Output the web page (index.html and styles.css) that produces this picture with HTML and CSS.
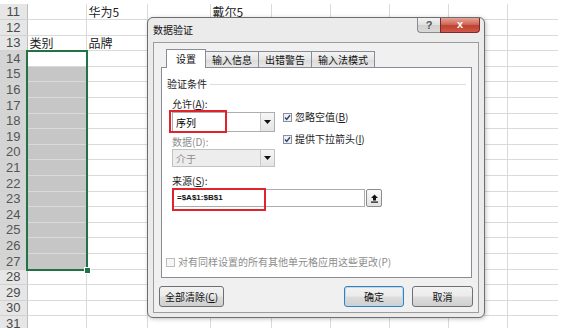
FILE: index.html
```html
<!DOCTYPE html>
<html lang="zh-CN">
<head>
  <meta charset="UTF-8">
  <meta name="viewport" content="width=device-width, initial-scale=1.0">
  <title>数据验证</title>
  <link rel="stylesheet" href="styles.css">
</head>
<body>
  <div class="sheet">
    <table class="grid">
      <colgroup>
        <col class="col-rh"><col class="col-a"><col class="col-b"><col class="col-c"><col class="col-d">
        <col class="col-n"><col class="col-n"><col class="col-n"><col class="col-n"><col class="col-i">
      </colgroup>
      <tr><th>11</th><td></td><td>华为5</td><td></td><td>戴尔5</td><td></td><td></td><td></td><td></td><td></td></tr>
      <tr><th>12</th><td></td><td></td><td></td><td></td><td></td><td></td><td></td><td></td><td></td></tr>
      <tr><th>13</th><td>类别</td><td>品牌</td><td></td><td></td><td></td><td></td><td></td><td></td><td></td></tr>
      <tr><th class="on">14</th><td></td><td></td><td></td><td></td><td></td><td></td><td></td><td></td><td></td></tr>
      <tr><th class="on">15</th><td class="fill"></td><td></td><td></td><td></td><td></td><td></td><td></td><td></td><td></td></tr>
      <tr><th class="on">16</th><td class="fill"></td><td></td><td></td><td></td><td></td><td></td><td></td><td></td><td></td></tr>
      <tr><th class="on">17</th><td class="fill"></td><td></td><td></td><td></td><td></td><td></td><td></td><td></td><td></td></tr>
      <tr><th class="on">18</th><td class="fill"></td><td></td><td></td><td></td><td></td><td></td><td></td><td></td><td></td></tr>
      <tr><th class="on">19</th><td class="fill"></td><td></td><td></td><td></td><td></td><td></td><td></td><td></td><td></td></tr>
      <tr><th class="on">20</th><td class="fill"></td><td></td><td></td><td></td><td></td><td></td><td></td><td></td><td></td></tr>
      <tr><th class="on">21</th><td class="fill"></td><td></td><td></td><td></td><td></td><td></td><td></td><td></td><td></td></tr>
      <tr><th class="on">22</th><td class="fill"></td><td></td><td></td><td></td><td></td><td></td><td></td><td></td><td></td></tr>
      <tr><th class="on">23</th><td class="fill"></td><td></td><td></td><td></td><td></td><td></td><td></td><td></td><td></td></tr>
      <tr><th class="on">24</th><td class="fill"></td><td></td><td></td><td></td><td></td><td></td><td></td><td></td><td></td></tr>
      <tr><th class="on">25</th><td class="fill"></td><td></td><td></td><td></td><td></td><td></td><td></td><td></td><td></td></tr>
      <tr><th class="on">26</th><td class="fill"></td><td></td><td></td><td></td><td></td><td></td><td></td><td></td><td></td></tr>
      <tr><th class="on">27</th><td class="fill"></td><td></td><td></td><td></td><td></td><td></td><td></td><td></td><td></td></tr>
      <tr><th>28</th><td></td><td></td><td></td><td></td><td></td><td></td><td></td><td></td><td></td></tr>
      <tr><th>29</th><td></td><td></td><td></td><td></td><td></td><td></td><td></td><td></td><td></td></tr>
      <tr><th>30</th><td></td><td></td><td></td><td></td><td></td><td></td><td></td><td></td><td></td></tr>
      <tr><th>31</th><td></td><td></td><td></td><td></td><td></td><td></td><td></td><td></td><td></td></tr>
    </table>
    <div class="selection"><span class="handle"></span></div>
  </div>

  <div class="dialog">
    <div class="titlebar">
      <span class="title">数据验证</span>
      <div class="caption">
        <span class="cap-btn help">?</span>
        <span class="cap-btn close">x</span>
      </div>
    </div>

    <div class="client">
      <div class="tabs">
        <span class="tab active">设置</span>
        <span class="tab">输入信息</span>
        <span class="tab">出错警告</span>
        <span class="tab">输入法模式</span>
      </div>

      <div class="panel">
        <div class="group-head">验证条件</div>

        <div class="form">
          <div class="lbl lbl-allow">允许(<u>A</u>):</div>
          <div class="select sel-allow">
            <span>序列</span>
            <span class="drop"><svg width="7" height="4" viewBox="0 0 7 4"><path d="M0 0h7L3.5 4z" fill="#111"/></svg></span>
          </div>
          <div class="checks">
            <div class="check">
              <svg width="9" height="9" viewBox="0 0 9 9"><rect x=".5" y=".5" width="8" height="8" fill="#eef2f8" stroke="#8e8f8f"/><path d="M2 4.6l1.7 1.8L7 2.2" fill="none" stroke="#26447f" stroke-width="1.4"/></svg>
              <span>忽略空值(<u>B</u>)</span>
            </div>
            <div class="check">
              <svg width="9" height="9" viewBox="0 0 9 9"><rect x=".5" y=".5" width="8" height="8" fill="#eef2f8" stroke="#8e8f8f"/><path d="M2 4.6l1.7 1.8L7 2.2" fill="none" stroke="#26447f" stroke-width="1.4"/></svg>
              <span>提供下拉箭头(<u>I</u>)</span>
            </div>
          </div>
          <div class="lbl lbl-data disabled">数据(D):</div>
          <div class="select sel-data disabled">
            <span>介于</span>
            <span class="drop"><svg width="7" height="4" viewBox="0 0 7 4"><path d="M0 0h7L3.5 4z" fill="#111"/></svg></span>
          </div>
          <div class="lbl lbl-source">来源(<u>S</u>):</div>
        </div>

        <div class="source">
          <div class="source-input">=$A$1:$B$1</div>
          <span class="pick"><svg width="9" height="9" viewBox="0 0 9 9"><path d="M4.5 0.5L8 4H6V6.5H3V4H1z" fill="#111"/><rect x="1" y="7.5" width="7" height="1.2" fill="#111"/></svg></span>
        </div>

        <div class="apply">
          <svg width="9" height="9" viewBox="0 0 9 9"><rect x=".5" y=".5" width="8" height="8" fill="#f6f6f6" stroke="#bdbdbd"/></svg>
          <span>对有同样设置的所有其他单元格应用这些更改(P)</span>
        </div>

        <div class="highlight hl-allow"></div>
        <div class="highlight hl-source"></div>
      </div>

      <div class="actions">
        <span class="btn btn-clear">全部清除(<u>C</u>)</span>
        <span class="btn btn-ok">确定</span>
        <span class="btn btn-cancel">取消</span>
      </div>
    </div>
  </div>
</body>
</html>
```

FILE: styles.css
```css
body {
  margin: 0;
  width: 569px;
  height: 328px;
  overflow: hidden;
  background: #fff;
  font-family: "Noto Sans CJK SC", "Liberation Sans", sans-serif;
  color: #000;
}

/* spreadsheet */
.sheet {
  position: relative;
  padding-top: 4px;
}
.grid {
  border-collapse: collapse;
  table-layout: fixed;
  width: 558px;
  font-size: 12px;
}
.col-rh { width: 27px; }
.col-a { width: 59px; }
.col-b { width: 61px; }
.col-c { width: 63px; }
.col-d { width: 61px; }
.col-n { width: 59px; }
.col-i { width: 51px; }
.grid tr {
  height: 15.6px;
}
.grid td {
  padding: 0 2px;
  border-right: 1px solid #dadada;
  border-bottom: 1px solid #dadada;
  line-height: 14px;
  vertical-align: bottom;
  white-space: nowrap;
  overflow: hidden;
  color: #222;
}
.grid td:last-child {
  border-right: none;
}
.grid th {
  padding: 0;
  background: #e6e6e6;
  border-right: 1px solid #bdbdbd;
  border-bottom: 1px solid #d2d2d2;
  font: 13px "Liberation Sans", Arial, sans-serif;
  color: #4a4a4a;
  line-height: 14px;
  vertical-align: bottom;
  text-align: center;
}
.grid th.on {
  background: #d4d4d4;
  color: #555;
}
.grid td.fill {
  background: #c6c6c6;
}
.selection {
  position: absolute;
  left: 26px;
  top: 50px;
  width: 62px;
  height: 221px;
  box-sizing: border-box;
  border: 2px solid #217346;
}
.handle {
  position: absolute;
  right: -5px;
  bottom: -5px;
  width: 5px;
  height: 5px;
  background: #217346;
  border: 1px solid #fff;
}

/* dialog */
.dialog {
  position: absolute;
  left: 147px;
  top: 17px;
  width: 338px;
  height: 301px;
  box-sizing: border-box;
  border: 1px solid #6e6e6e;
  border-radius: 6px;
  background: #ebebeb;
  padding: 0 5px 4px;
  display: flex;
  flex-direction: column;
  box-shadow: 1px 1px 4px rgba(0, 0, 0, 0.25);
  font-size: 10px;
}
.titlebar {
  height: 24px;
  display: flex;
  align-items: flex-start;
}
.title {
  line-height: 24px;
  color: #111;
}
.caption {
  margin-left: auto;
  margin-right: -1px;
  display: flex;
}
.cap-btn {
  height: 15px;
  box-sizing: border-box;
  display: flex;
  align-items: center;
  justify-content: center;
  font: bold 11px "Liberation Sans", Arial, sans-serif;
}
.help {
  width: 23px;
  border: 1px solid #8a8a8a;
  border-top: none;
  border-right: none;
  border-radius: 0 0 0 4px;
  background: linear-gradient(#f2f2f2, #e0e0e0 50%, #cfcfcf 51%, #dadada);
  color: #555;
}
.close {
  width: 40px;
  border: 1px solid #7a2a2a;
  border-top: none;
  border-radius: 0 0 4px 0;
  background: linear-gradient(#e4a394, #cf6a5b 45%, #c0402f 55%, #d05a48);
  color: #fff;
  padding-bottom: 2px;
}
.client {
  flex: 1;
  border: 1px solid #9c9c9c;
  background: #f0f0f0;
  padding: 6px 6px 5px 7px;
  display: flex;
  flex-direction: column;
}
.tabs {
  display: flex;
  align-items: flex-end;
  height: 19px;
  margin: 0 0 -1px 5px;
  position: relative;
  z-index: 1;
}
.tab {
  height: 16px;
  margin-bottom: 1px;
  margin-left: -1px;
  padding: 0 6px;
  box-sizing: border-box;
  border: 1px solid #898c95;
  border-bottom: none;
  background: linear-gradient(#f3f3f3, #e5e5e5 50%, #dadada 51%, #e8e8e8);
  line-height: 15px;
  color: #111;
}
.tab.active {
  height: 19px;
  margin-bottom: 0;
  margin-left: 0;
  padding: 0 9px;
  background: #fff;
  line-height: 17px;
  position: relative;
  z-index: 2;
}
.panel {
  height: 211px;
  box-sizing: border-box;
  border: 1px solid #898c95;
  background: #fff;
  position: relative;
  padding: 8px 5px 8px 5px;
  display: flex;
  flex-direction: column;
}
.group-head {
  display: flex;
  align-items: center;
  gap: 3px;
  line-height: 16px;
  color: #1c1c1c;
}
.group-head::after {
  content: "";
  flex: 1;
  height: 1px;
  background: #d5dfe5;
}
.form {
  display: grid;
  grid-template-columns: 103px auto;
  column-gap: 8px;
  padding-left: 5px;
}
.lbl {
  grid-column: 1;
  line-height: 14px;
  color: #1c1c1c;
}
.lbl-allow { grid-row: 1; margin-top: 5px; }
.lbl-data { grid-row: 3; margin-top: 3px; }
.lbl-source { grid-row: 5; margin-top: 7px; }
.disabled {
  color: #8d8d8d;
}
.select {
  grid-column: 1;
  display: flex;
  align-items: center;
  box-sizing: border-box;
  border: 1px solid #abadb3;
  background: #fff;
  padding-left: 3px;
}
.sel-allow {
  grid-row: 2;
  height: 20px;
  margin-top: 1px;
}
.sel-data {
  grid-row: 4;
  height: 18px;
  background: #ededed;
  border-color: #c2c2c2;
}
.drop {
  margin-left: auto;
  width: 14px;
  height: 100%;
  box-sizing: border-box;
  border-left: 1px solid #c9c9c9;
  background: linear-gradient(#f6f6f6, #e4e4e4);
  display: flex;
  align-items: center;
  justify-content: center;
}
.checks {
  grid-column: 2;
  grid-row: 2 / 4;
  align-self: start;
  margin-top: -1px;
  display: flex;
  flex-direction: column;
  gap: 8px;
}
.check {
  display: flex;
  align-items: center;
  gap: 3px;
  line-height: 14px;
  color: #1c1c1c;
}
.source {
  display: flex;
  padding-left: 5px;
  margin-top: 1px;
}
.source-input {
  width: 193px;
  height: 18px;
  box-sizing: border-box;
  border: 1px solid #abadb3;
  padding-left: 4px;
  font: bold 8px "Liberation Sans", Arial, sans-serif;
  line-height: 16px;
  color: #111;
}
.pick {
  width: 16px;
  height: 18px;
  margin-left: 1px;
  box-sizing: border-box;
  border: 1px solid #8c8c8c;
  border-radius: 2px;
  background: linear-gradient(#fafafa, #e3e3e3);
  display: flex;
  align-items: center;
  justify-content: center;
}
.apply {
  margin-top: auto;
  margin-left: -1px;
  display: flex;
  align-items: center;
  gap: 3px;
  line-height: 14px;
  color: #8d8d8d;
}
.highlight {
  position: absolute;
  box-sizing: border-box;
  border: 2px solid #e1232b;
  height: 23px;
}
.hl-allow {
  left: 7px;
  top: 42px;
  width: 58px;
}
.hl-source {
  left: 10px;
  top: 120px;
  width: 94px;
}
.actions {
  display: flex;
  gap: 8px;
  height: 21px;
  margin: 8px -1px 0 -2px;
}
.btn {
  box-sizing: border-box;
  border: 1px solid #707070;
  border-radius: 3px;
  background: linear-gradient(#f2f2f2, #ebebeb 48%, #dddddd 52%, #cfcfcf);
  display: flex;
  align-items: center;
  justify-content: center;
  color: #111;
}
.btn-clear { width: 65px; }
.btn-ok {
  width: 60px;
  margin-left: auto;
  border-color: #3c7fb1;
  box-shadow: inset 0 0 0 1px #b5dcf3;
}
.btn-cancel { width: 61px; }
```
